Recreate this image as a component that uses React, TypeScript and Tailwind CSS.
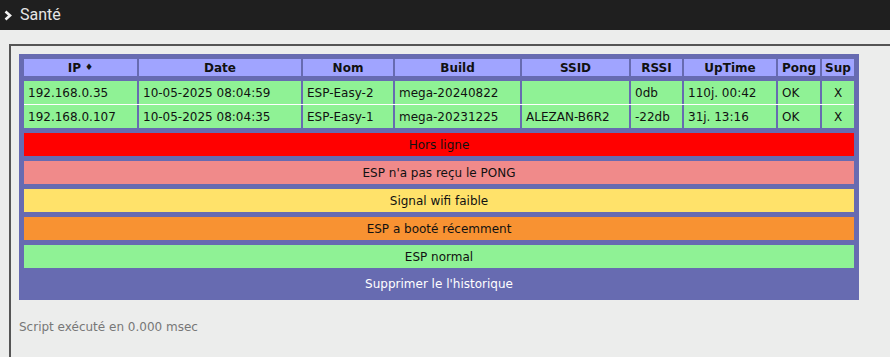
const cols = ["IP", "Date", "Nom", "Build", "SSID", "RSSI", "UpTime", "Pong", "Sup"];

const rows = [
  ["192.168.0.35", "10-05-2025 08:04:59", "ESP-Easy-2", "mega-20240822", "", "0db", "110j. 00:42", "OK", "X"],
  ["192.168.0.107", "10-05-2025 08:04:35", "ESP-Easy-1", "mega-20231225", "ALEZAN-B6R2", "-22db", "31j. 13:16", "OK", "X"],
];

const legend = [
  { label: "Hors ligne", cls: "bg-[#ff0000]" },
  { label: "ESP n'a pas reçu le PONG", cls: "bg-[#f08a8a]" },
  { label: "Signal wifi faible", cls: "bg-[#ffe26a]" },
  { label: "ESP a booté récemment", cls: "bg-[#f89232]" },
  { label: "ESP normal", cls: "bg-[#8ff295]" },
];

const grid = "grid grid-cols-[113px_162px_90px_125px_107px_51px_92px_42px_32px] gap-x-[2px]";

export default function App() {
  return (
    <div className="h-screen overflow-hidden bg-[#ecedec] font-['DejaVu_Sans',Verdana,sans-serif] text-[12px] text-[#111]">
      <div className="flex h-[30px] items-center bg-[#1f1f1f]">
        <svg width="8" height="11" viewBox="0 0 8 11" className="ml-[4px]">
          <polyline points="1.5,1.5 6,5.5 1.5,9.5" fill="none" stroke="#f2f2f2" strokeWidth="2.6" />
        </svg>
        <span className="ml-[8px] font-['Roboto',sans-serif] text-[16px] text-[#e6e6e6]">Santé</span>
      </div>

      <div className="ml-[9px] mt-[14px] h-full border-l-2 border-t-2 border-[#555] pl-[8px] pt-[8px]">
        <div className="w-[840px] bg-[#676bb1] px-[5px] pt-[5px]">
          <div className={grid}>
            {cols.map((c) => (
              <div key={c} className="flex h-[17px] items-center justify-center bg-[#a0a4ff] font-bold">
                {c}
                {c === "IP" && <span className="ml-[4px] text-[9px]">♦</span>}
              </div>
            ))}
          </div>

          <div className="mt-[5px]">
            {rows.map((r, i) => (
              <div key={i} className={`${grid} ${i === 0 ? "border-b border-white" : ""}`}>
                {r.map((v, j) => (
                  <div
                    key={j}
                    className={`flex h-[23px] items-center bg-[#8ff295] ${j === 8 ? "justify-center" : "pl-[4px]"}`}
                  >
                    {v}
                  </div>
                ))}
              </div>
            ))}
          </div>

          {legend.map((l) => (
            <div key={l.label} className={`mt-[5px] flex h-[23px] items-center justify-center ${l.cls}`}>
              {l.label}
            </div>
          ))}

          <button className="flex h-[32px] w-full items-center justify-center text-white">
            Supprimer le l'historique
          </button>
        </div>

        <p className="mt-[18px] text-[#777]">Script exécuté en 0.000 msec</p>
      </div>
    </div>
  );
}
